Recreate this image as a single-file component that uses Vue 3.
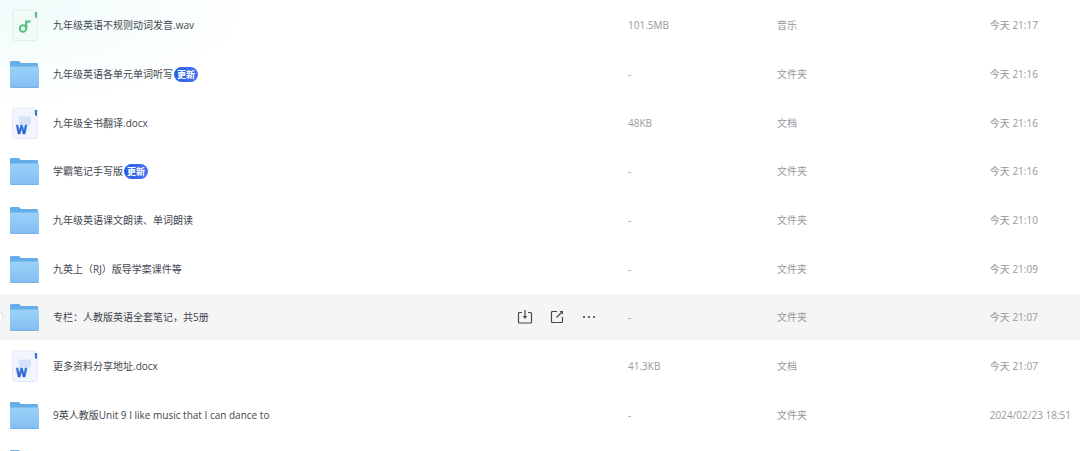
<script setup>
const files = [
  { name: '九年级英语不规则动词发音.wav', kind: 'audio', size: '101.5MB', type: '音乐', time: '今天 21:17' },
  { name: '九年级英语各单元单词听写', kind: 'folder', size: '-', type: '文件夹', time: '今天 21:16', updated: true },
  { name: '九年级全书翻译.docx', kind: 'word', size: '48KB', type: '文档', time: '今天 21:16' },
  { name: '学霸笔记手写版', kind: 'folder', size: '-', type: '文件夹', time: '今天 21:16', updated: true },
  { name: '九年级英语课文朗读、单词朗读', kind: 'folder', size: '-', type: '文件夹', time: '今天 21:10' },
  { name: '九英上（RJ）版导学案课件等', kind: 'folder', size: '-', type: '文件夹', time: '今天 21:09' },
  { name: '专栏：人教版英语全套笔记，共5册', kind: 'folder', size: '-', type: '文件夹', time: '今天 21:07', active: true },
  { name: '更多资料分享地址.docx', kind: 'word', size: '41.3KB', type: '文档', time: '今天 21:07' },
  { name: '9英人教版Unit 9 I like music that I can dance to', kind: 'folder', size: '-', type: '文件夹', time: '2024/02/23 18:51' },
  { name: '', kind: 'folder', size: '', type: '', time: '' }
]
</script>

<template>
  <main class="browser">
    <svg class="defs" aria-hidden="true">
      <defs>
        <linearGradient id="folderFront" x1="0" y1="0" x2="0" y2="1">
          <stop offset="0" stop-color="#98d0f8" />
          <stop offset="0.5" stop-color="#90c9f6" />
          <stop offset="1" stop-color="#82bdf1" />
        </linearGradient>
        <linearGradient id="wordMark" x1="0" y1="0" x2="0" y2="1">
          <stop offset="0" stop-color="#2b78e0" />
          <stop offset="1" stop-color="#2558c8" />
        </linearGradient>
      </defs>
    </svg>
    <table class="files">
      <colgroup>
        <col class="col-name" />
        <col class="col-size" />
        <col class="col-type" />
        <col />
      </colgroup>
      <tbody>
        <tr v-for="(file, i) in files" :key="i" :class="{ active: file.active }">
          <td class="name-cell">
            <div class="entry">
              <input v-if="file.active" class="pick" type="checkbox" :aria-label="file.name" />
              <svg v-if="file.kind === 'folder'" class="icon" viewBox="0 0 32 32" aria-hidden="true">
                <path d="M1 4Q1 3 2 3H10L12 5H28Q29 5 29 6V20H1Z" fill="#66aee8" />
                <path d="M1 9.500Q1 8.500 2 8.500H29Q30 8.500 30 9.500V29Q30 30 29 30H2Q1 30 1 29Z" fill="url(#folderFront)" />
                <path d="M2 29.500H29" stroke="#73b1e9" />
              </svg>
              <svg v-else-if="file.kind === 'audio'" class="icon" viewBox="0 0 32 32" aria-hidden="true">
                <path d="M5.500 1H26L28.500 3.500V29.500Q28.500 31.500 26.500 31.500H5.500Q3.500 31.500 3.500 29.500V3Q3.500 1 5.500 1Z" fill="#f2faf7" stroke="#e4eeeb" />
                <path d="M25.800 3H28V9Q25.800 9 25.800 6.500Z" fill="#57be8b" />
                <circle cx="14" cy="19.500" r="3.200" fill="none" stroke="#51c184" stroke-width="2" />
                <path d="M17.200 19.500V12.500H21.500" fill="none" stroke="#51c184" stroke-width="2.200" />
              </svg>
              <svg v-else class="icon" viewBox="0 0 32 32" aria-hidden="true">
                <path d="M5.500 1H26L28.500 3.500V29.500Q28.500 31.500 26.500 31.500H5.500Q3.500 31.500 3.500 29.500V3Q3.500 1 5.500 1Z" fill="#f1f5fd" stroke="#e5eaf5" />
                <path d="M10 9.500H22V17.500H10Z" fill="#d7e2f8" />
                <path d="M25.800 3H28V9Q25.800 9 25.800 6.500Z" fill="#3975d8" />
                <text x="12.500" y="27" text-anchor="middle" class="word-mark">W</text>
              </svg>
              <span class="name">{{ file.name }}</span>
              <span v-if="file.updated" class="badge">更新</span>
              <div v-if="file.active" class="actions">
                <button type="button" aria-label="下载">
                  <svg viewBox="0 0 16 16" aria-hidden="true">
                    <path d="M5 3.500H2.500Q1.500 3.500 1.500 4.500V13Q1.500 14 2.500 14H13.500Q14.500 14 14.500 13V4.500Q14.500 3.500 13.500 3.500H11M8 1V9" />
                    <path class="head" d="M5.800 7H10.200L8 10Z" />
                  </svg>
                </button>
                <button type="button" aria-label="分享">
                  <svg viewBox="0 0 16 16" aria-hidden="true">
                    <path d="M8 2.500H3.500Q2.500 2.500 2.500 3.500V12.500Q2.500 13.500 3.500 13.500H12.500Q13.500 13.500 13.500 12.500V8M7.500 8.500L12.500 3.500" />
                    <path class="head" d="M10.500 2H14V5.500Z" />
                  </svg>
                </button>
                <button type="button" aria-label="更多">
                  <svg viewBox="0 0 16 16" aria-hidden="true">
                    <g class="head"><circle cx="3" cy="8" r="1.100" /><circle cx="8" cy="8" r="1.100" /><circle cx="13" cy="8" r="1.100" /></g>
                  </svg>
                </button>
              </div>
            </div>
          </td>
          <td>{{ file.size }}</td>
          <td>{{ file.type }}</td>
          <td>{{ file.time }}</td>
        </tr>
      </tbody>
    </table>
  </main>
</template>

<style>
body {
  margin: 0;
  background: #fff;
}
</style>

<style scoped>
.browser {
  box-sizing: border-box;
  height: 100vh;
  overflow: hidden;
  padding-top: 1px;
  background: radial-gradient(ellipse 260px 110px at 0 0, #effcfb, #fff);
  font-family: "Open Sans", "Noto Sans CJK SC", sans-serif;
  font-size: 10px;
  line-height: 16px;
  color: #42464e;
}
.defs {
  position: absolute;
  width: 0;
  height: 0;
}
.files {
  width: 100%;
  table-layout: fixed;
  border-collapse: separate;
  border-spacing: 0;
}
.col-name {
  width: 58.15%;
}
.col-size {
  width: 13.8%;
}
.col-type {
  width: 19.7%;
}
tr {
  height: 49px;
}
tr:nth-child(3n) {
  height: 48px;
}
td {
  box-sizing: border-box;
  padding: 0;
  border: solid transparent;
  border-width: 1px 0 2px;
  background-clip: padding-box;
  vertical-align: middle;
  white-space: nowrap;
  color: #96989c;
}
.name-cell {
  color: #42464e;
}
.active td {
  background-color: #f5f5f5;
}
.entry {
  position: relative;
  display: flex;
  align-items: center;
  padding-left: 9px;
}
.pick {
  position: absolute;
  left: -8px;
  box-sizing: border-box;
  width: 11px;
  height: 11px;
  margin: 0;
  appearance: none;
  border: 1px solid #e2e3e5;
  border-radius: 2px;
  background: #fff;
}
.icon {
  flex: none;
  width: 32px;
  height: 32px;
  margin-right: 12px;
}
.word-mark {
  font: bold 13px Roboto, sans-serif;
  fill: url(#wordMark);
  stroke: url(#wordMark);
  stroke-width: 0.4;
}
.badge {
  margin-left: 1px;
  padding: 0 3px;
  border-radius: 8px;
  background: linear-gradient(90deg, #285fe3, #4770f5);
  color: #fff;
  font-size: 9px;
  font-weight: 700;
  line-height: 15px;
}
.actions {
  display: flex;
  gap: 16px;
  margin-left: auto;
  padding-right: 31px;
}
button {
  display: block;
  width: 16px;
  height: 16px;
  padding: 0;
  border: 0;
  background: none;
  cursor: pointer;
}
button svg {
  display: block;
  width: 16px;
  height: 16px;
  fill: none;
  stroke: #44464a;
  stroke-width: 1.2;
}
.head {
  fill: #44464a;
  stroke: none;
}
</style>
